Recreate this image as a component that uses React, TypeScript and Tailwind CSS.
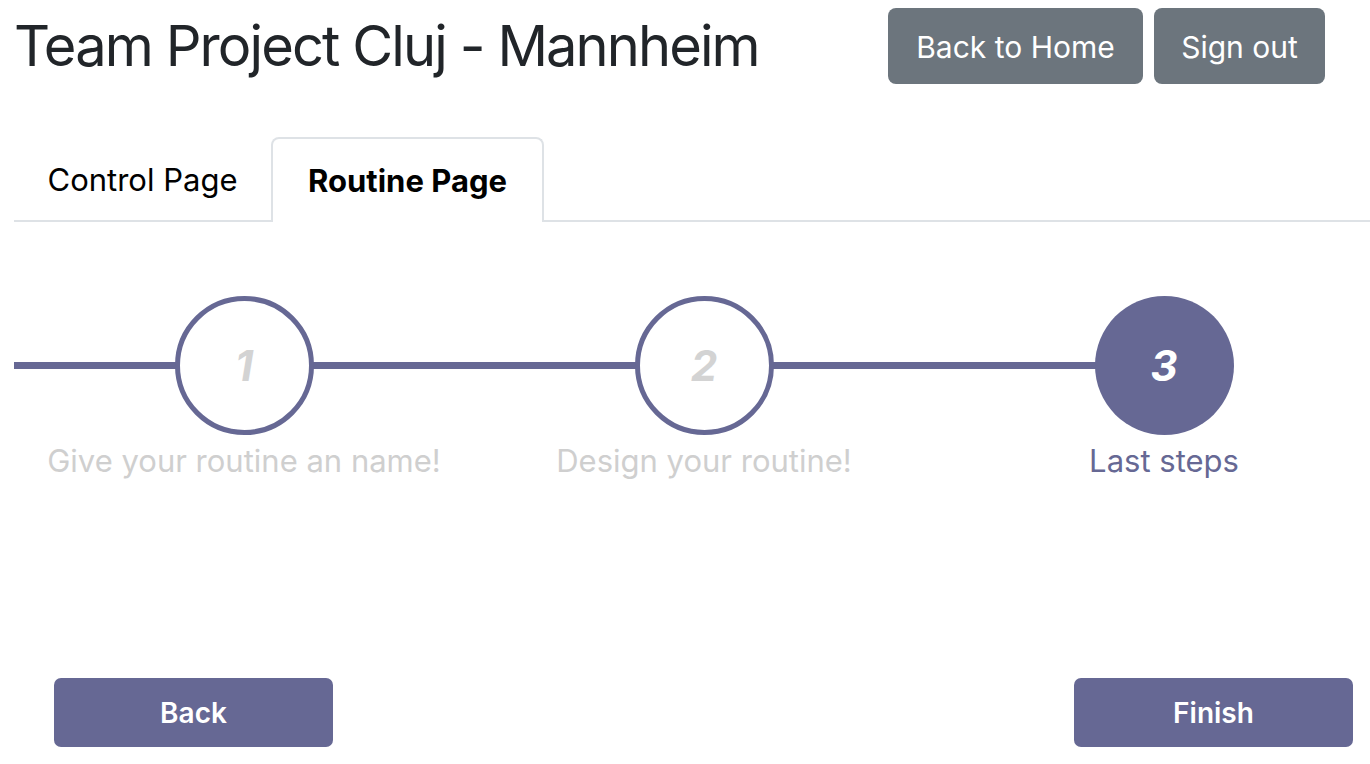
import React from "react";

function Step({ n, label, active }: { n: number; label: string; active?: boolean }) {
  return (
    <div className="flex w-[460px] shrink-0 flex-col items-center">
      <div
        className={
          active
            ? "relative z-10 flex h-[139px] w-[139px] items-center justify-center rounded-full bg-[#666894]"
            : "relative z-10 flex h-[139px] w-[139px] items-center justify-center rounded-full border-[5px] border-[#666894] bg-white"
        }
      >
        <span
          className={
            active
              ? "text-[42px] font-bold italic leading-none text-white"
              : "text-[42px] font-bold italic leading-none text-[#d3d3d3]"
          }
        >
          {n}
        </span>
      </div>
      <div
        className={
          active
            ? "mt-[8px] text-[31px] leading-[36px] text-[#666894]"
            : "mt-[8px] text-[31px] leading-[36px] text-[#cfcfcf]"
        }
      >
        {label}
      </div>
    </div>
  );
}

export default function App() {
  return (
    <div
      className="h-[764px] w-[1370px] overflow-hidden bg-white pl-[14px]"
      style={{ fontFamily: "Inter, 'Noto Sans', sans-serif" }}
    >
      {/* Header */}
      <div className="flex items-start pt-[8px]">
        <h1 className="mt-[4px] text-[56px] font-normal leading-[68px] tracking-[-1.9px] text-[#212529]">
          Team Project Cluj - Mannheim
        </h1>
        <div className="ml-auto mr-[45px] flex gap-[11px]">
          <button className="h-[76px] w-[255px] rounded-[8px] bg-[#6c757d] pt-[2px] text-[30px] text-white">
            Back to Home
          </button>
          <button className="h-[76px] w-[171px] rounded-[8px] bg-[#6c757d] pt-[2px] text-[30px] text-white">
            Sign out
          </button>
        </div>
      </div>

      {/* Tabs */}
      <div className="mt-[53px] flex w-[1400px] border-b-2 border-[#dee2e6]">
        <div className="flex h-[83px] w-[257px] items-center justify-center pt-[4px] text-[31px] text-black">
          Control Page
        </div>
        <div className="-mb-[2px] flex h-[85px] w-[273px] items-center justify-center rounded-t-[8px] border-2 border-b-0 border-[#dee2e6] bg-white pt-[2px] text-[31px] font-bold text-black">
          Routine Page
        </div>
      </div>

      {/* Stepper */}
      <div className="relative mt-[74px] flex">
        <div className="absolute left-0 top-[66px] h-[7px] w-[1150px] bg-[#666894]" />
        <Step n={1} label="Give your routine an name!" />
        <Step n={2} label="Design your routine!" />
        <Step n={3} label="Last steps" active />
      </div>

      {/* Bottom buttons */}
      <div className="mt-[199px] flex pl-[40px]">
        <button className="h-[69px] w-[279px] rounded-[7px] bg-[#666894] text-[28px] font-semibold text-white">
          Back
        </button>
        <button className="ml-[741px] h-[69px] w-[279px] rounded-[7px] bg-[#666894] text-[28px] font-semibold text-white">
          Finish
        </button>
      </div>
    </div>
  );
}
